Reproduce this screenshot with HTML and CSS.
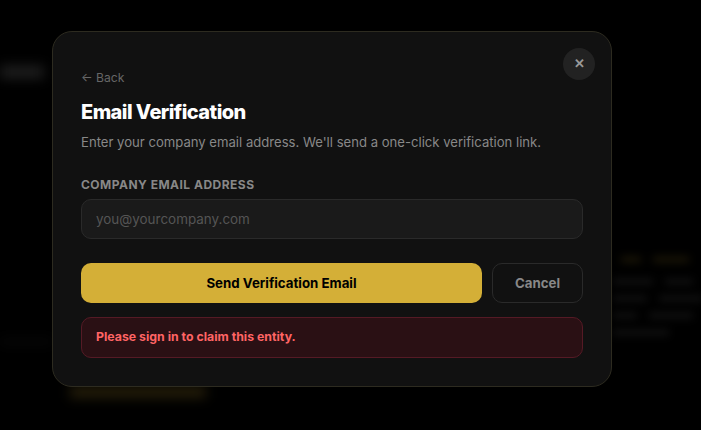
FILE: index.html
```html
<!DOCTYPE html>
<html lang="en">
<head>
<meta charset="utf-8">
<title>Email Verification</title>
<link rel="stylesheet" href="styles.css">
</head>
<body>
<div class="backdrop" aria-hidden="true">
  <span class="blob blob-logo"></span>
  <span class="blob blob-gold"></span>
  <span class="blob blob-left"></span>
  <div class="blurred-copy">
    <div class="blur-row blur-heading"><i class="w-20"></i><i class="w-36"></i></div>
    <div class="blur-row"><i class="w-40"></i><i class="w-28"></i></div>
    <div class="blur-row"><i class="w-34"></i><i class="w-44"></i></div>
    <div class="blur-row"><i class="w-24"></i><i class="w-44"></i></div>
    <div class="blur-row"><i class="w-56"></i></div>
  </div>
</div>
<main class="overlay">
  <section class="modal">
    <button class="close" type="button">✕</button>
    <a class="back">← Back</a>
    <h1 class="title">Email Verification</h1>
    <p class="intro">Enter your company email address. We'll send a one-click verification link.</p>
    <label class="label" for="email">COMPANY EMAIL ADDRESS</label>
    <input class="field" id="email" type="email" placeholder="you@yourcompany.com">
    <div class="actions">
      <button class="primary" type="button">Send Verification Email</button>
      <button class="secondary" type="button">Cancel</button>
    </div>
    <div class="error">Please sign in to claim this entity.</div>
  </section>
</main>
</body>
</html>
```
FILE: styles.css
```css
* { box-sizing: border-box; }
html, body { margin: 0; height: 100%; }
body {
  background: #000;
  font-family: Inter, "Liberation Sans", sans-serif;
  overflow: hidden;
  position: relative;
}
.backdrop { position: absolute; inset: 0; overflow: hidden; }
.blob { position: absolute; display: block; filter: blur(6px); }
.blob-logo { left: 0; top: 65px; width: 44px; height: 14px; background: #1c1c1c; }
.blob-gold { left: 70px; top: 386px; width: 136px; height: 12px; background: #241d09; }
.blob-left { left: 0; top: 339px; width: 52px; height: 5px; background: #0a0a0a; }
.blurred-copy {
  position: absolute;
  left: 613px;
  top: 257px;
  width: 100px;
  display: flex;
  flex-direction: column;
  gap: 12px;
  filter: blur(4px);
}
.blur-row { display: flex; gap: 12px; height: 5px; }
.blur-row i { display: block; height: 100%; background: #151515; }
.blur-heading { margin-bottom: 5px; }
.blur-heading i { background: #211b07; }
.w-20 { width: 20px; margin-left: 8px; }
.w-24 { width: 24px; }
.w-28 { width: 28px; }
.w-34 { width: 34px; }
.w-36 { width: 36px; }
.w-40 { width: 40px; }
.w-44 { width: 44px; }
.w-56 { width: 56px; }
.overlay {
  position: absolute;
  inset: 0;
  display: flex;
  align-items: flex-start;
  padding: 31px 89px 0 52px;
}
.modal {
  position: relative;
  width: 560px;
  height: 356px;
  padding: 38px 28px 28px;
  display: flex;
  flex-direction: column;
  background: #111;
  border: 1px solid #2d2b20;
  border-radius: 20px;
}
.close {
  position: absolute;
  top: 16px;
  right: 16px;
  width: 32px;
  height: 32px;
  border: 0;
  border-radius: 50%;
  background: #222;
  color: #999;
  font: 700 13px Inter, sans-serif;
  padding: 0 0 2px;
}
.back { color: #666; font-size: 12.16px; line-height: 15px; margin-bottom: 15px; }
.title {
  margin: 0 0 8px;
  color: #fff;
  font-size: 20px;
  font-weight: 800;
  line-height: 24px;
  letter-spacing: -0.56px;
}
.intro { margin: 0 0 25px; color: #888; font-size: 13.12px; line-height: 20px; }
.label { color: #888; font-size: 12px; font-weight: 700; line-height: 15px; letter-spacing: 0.48px; margin-bottom: 7px; }
.field {
  width: 100%;
  height: 40px;
  padding: 0 14px;
  background: #1a1a1a;
  border: 1px solid #2a2a2a;
  border-radius: 10px;
  color: #fff;
  font: 400 13.44px Inter, sans-serif;
  outline: 0;
  margin-bottom: 24px;
}
.field::placeholder { color: #555; opacity: 1; }
.actions { display: flex; gap: 10px; margin-bottom: 14px; }
.primary {
  flex: 1;
  height: 40px;
  border: 0;
  border-radius: 10px;
  background: #d4af37;
  color: #000;
  font: 700 13.28px Inter, sans-serif;
}
.secondary {
  width: 91px;
  height: 40px;
  background: transparent;
  border: 1px solid #2a2a2a;
  border-radius: 10px;
  color: #888;
  font: 700 13.28px Inter, sans-serif;
}
.error {
  height: 41px;
  padding: 0 14px 2px;
  display: flex;
  align-items: center;
  background: #2a1014;
  border: 1px solid #551a25;
  border-radius: 10px;
  color: #ff6464;
  font-size: 12.32px;
  font-weight: 700;
}
```
